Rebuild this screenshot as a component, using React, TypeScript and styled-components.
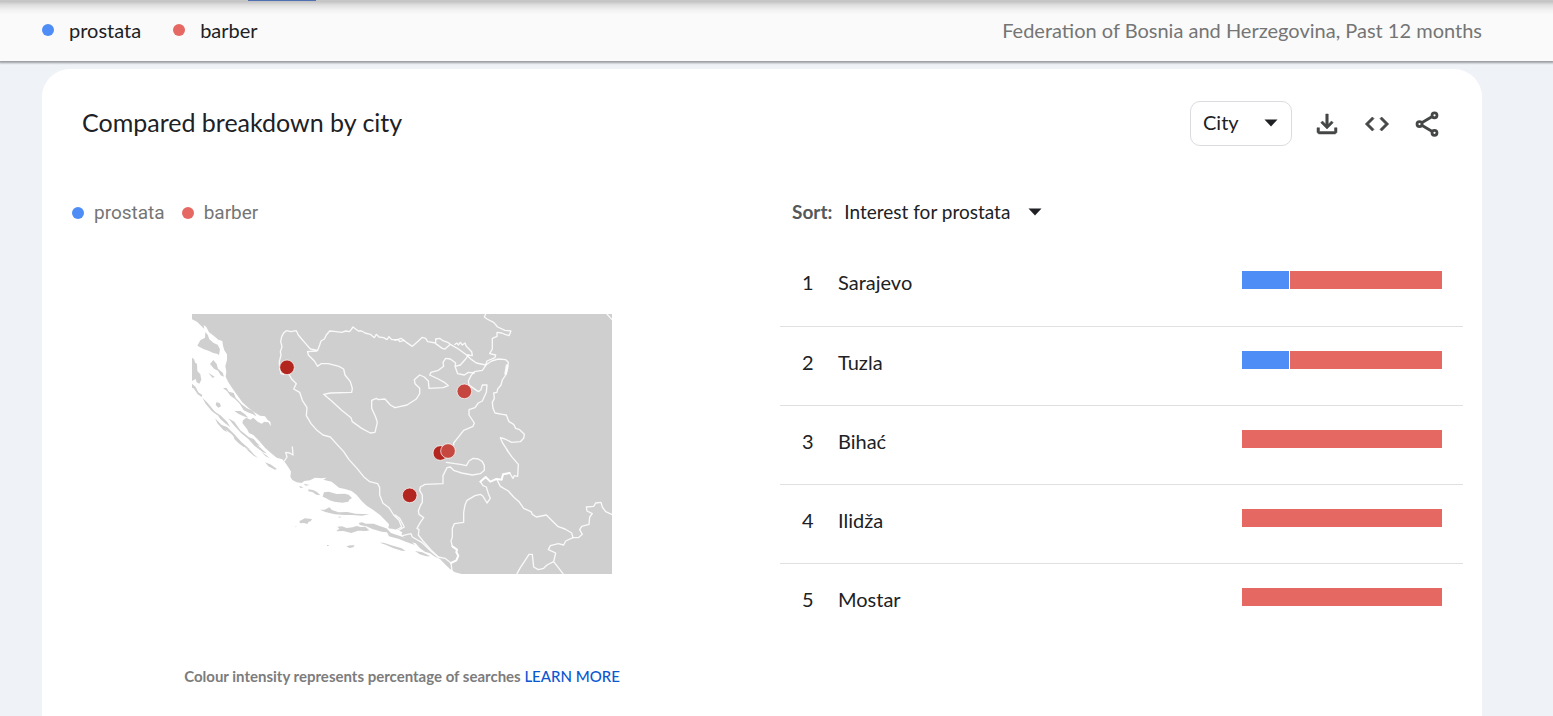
import React from "react";
import styled, { createGlobalStyle } from "styled-components";

const BLUE = "#4f8df6";
const RED = "#e56962";
const SANS = '"Lato", "Open Sans", sans-serif';

const GlobalStyle = createGlobalStyle`
  *, *::before, *::after { box-sizing: border-box; }
  body {
    margin: 0;
    min-height: 100vh;
    background: #eff2f7;
    color: #202124;
    font-family: ${SANS};
    font-size: 20px;
    line-height: 24px;
  }
`;

const TabStrip = styled.div`
  height: 1px;
  background: #dfe0df;
  padding-left: 248px;
`;

const TabIndicator = styled.div`
  width: 68px;
  height: 1px;
  background: #5b7fc9;
`;

const TermBar = styled.header`
  display: flex;
  align-items: center;
  justify-content: space-between;
  height: 60px;
  padding: 0 71px 2px 42px;
  background: linear-gradient(#c0c0c0, #dedede 4px, #f2f2f2 9px, #fafafa 14px);
  box-shadow: 0 1px 2px 1px rgba(0, 0, 0, 0.36);
`;

const Legend = styled.ul<{ $muted?: boolean }>`
  display: flex;
  gap: ${(p) => (p.$muted ? 17 : 32)}px;
  margin: 0;
  padding: 0;
  list-style: none;
  color: ${(p) => (p.$muted ? "#757575" : "#202124")};
  font-family: ${(p) => (p.$muted ? "Roboto, sans-serif" : SANS)};
  font-size: ${(p) => (p.$muted ? 19 : 20)}px;
`;

const Term = styled.li<{ $color: string; $gap: number }>`
  display: flex;
  align-items: center;
  gap: ${(p) => p.$gap}px;

  &::before {
    content: "";
    width: 12px;
    height: 12px;
    border-radius: 50%;
    background: ${(p) => p.$color};
  }
`;

const Scope = styled.p`
  margin: 0;
  color: #757575;
`;

const Page = styled.main`
  padding: 8px 71px 0 42px;
`;

const Card = styled.section`
  min-height: calc(100vh - 69px);
  border-radius: 28px 28px 0 0;
  background: #fff;
`;

const CardHeader = styled.div`
  display: flex;
  align-items: center;
  justify-content: space-between;
  height: 109px;
  padding: 0 40px;
`;

const Title = styled.h1`
  margin: 0;
  padding-bottom: 4px;
  font-size: 25px;
  line-height: 32px;
  font-weight: 400;
`;

const Tools = styled.div`
  display: flex;
  align-items: center;
  gap: 20px;
`;

const IconButton = styled.button`
  display: grid;
  place-items: center;
  width: 30px;
  height: 30px;
  padding: 0;
  border: 0;
  background: none;
  color: #444746;
  cursor: pointer;
`;

const Picker = styled.div<{ $boxed?: boolean }>`
  position: relative;
  width: ${(p) => (p.$boxed ? 102 : 200)}px;
  height: ${(p) => (p.$boxed ? 45 : 24)}px;
  border: ${(p) => (p.$boxed ? "1px solid #dadce0" : "0")};
  border-radius: ${(p) => (p.$boxed ? 10 : 0)}px;

  svg {
    position: absolute;
    right: ${(p) => (p.$boxed ? 13 : 2)}px;
    top: 50%;
    margin-top: -5px;
    pointer-events: none;
  }
`;

const Select = styled.select<{ $inset?: boolean }>`
  appearance: none;
  width: 100%;
  height: 100%;
  padding: 0 0 3px ${(p) => (p.$inset ? 12 : 0)}px;
  border: 0;
  background: none;
  color: #202124;
  font: inherit;
`;

const Columns = styled.div`
  display: grid;
  grid-template-columns: 1fr 1fr;
`;

const MapPane = styled.div`
  padding: 23px 30px 0;
`;

const MapFigure = styled.figure`
  display: flex;
  flex-direction: column;
  align-items: center;
  gap: 90px;
  margin: 89px 0 0;

  svg {
    display: block;
    width: 420px;
    max-width: 100%;
    height: auto;
  }
`;

const Caption = styled.figcaption`
  color: #7c7c7c;
  font-size: 15px;
  font-weight: 700;
`;

const LearnMore = styled.a`
  color: #0b57d0;
  font-weight: 500;
  text-decoration: none;
`;

const RankPane = styled.div`
  padding: 23px 19px 0 18px;
`;

const SortRow = styled.div`
  display: flex;
  gap: 12px;
  padding-left: 12px;
  font-size: 19px;
  line-height: 22px;
`;

const SortLabel = styled.label`
  color: #55585a;
  font-weight: 700;
`;

const RankTable = styled.table`
  width: 100%;
  margin-top: 22px;
  border-collapse: collapse;

  td, th {
    vertical-align: top;
  }
`;

const RankRow = styled.tr`
  height: 79px;

  & + & {
    border-top: 1px solid #e0e0e0;
  }
`;

const Rank = styled.td`
  width: 58px;
  padding: 23px 0 0 22px;
`;

const City = styled.th`
  padding: 23px 0 0;
  font-weight: 400;
  text-align: left;
`;

const Share = styled.td`
  width: 221px;
  padding: 24px 21px 0 0;
`;

const Bar = styled.div`
  display: flex;
  gap: 1px;
  height: 18px;
`;

const Segment = styled.span<{ $color: string }>`
  background: ${(p) => p.$color};
`;

const cities = [
  { name: "Sarajevo", prostata: 235 },
  { name: "Tuzla", prostata: 235 },
  { name: "Bihać", prostata: 0 },
  { name: "Ilidža", prostata: 0 },
  { name: "Mostar", prostata: 0 },
];

const Arrow = () => (
  <svg width="14" height="8" viewBox="0 0 14 8" aria-hidden="true">
    <path d="M0.5 0.5h13L7 7.5z" fill="#202124" />
  </svg>
);

const DownloadIcon = () => (
  <svg width="30" height="30" viewBox="0 0 24 24" fill="currentColor" stroke="currentColor" strokeWidth="0.4" aria-hidden="true">
    <path d="M12 16l-5-5 1.4-1.45 2.6 2.6V4h2v8.15l2.6-2.6L17 11zM6 20q-.82 0-1.41-.59T4 18v-3h2v3h12v-3h2v3q0 .82-.59 1.41T18 20z" />
  </svg>
);

const CodeIcon = () => (
  <svg width="28" height="28" viewBox="0 0 24 24" fill="currentColor" stroke="currentColor" strokeWidth="0.6" aria-hidden="true">
    <path d="M9.4 16.6 4.8 12l4.6-4.6L8 6l-6 6 6 6zm5.2 0 4.6-4.6-4.6-4.6L16 6l6 6-6 6z" />
  </svg>
);

const ShareIcon = () => (
  <svg width="30" height="30" viewBox="0 0 24 24" fill="none" stroke="currentColor" strokeWidth="2.2" aria-hidden="true">
    <circle cx="18" cy="5" r="2" />
    <circle cx="6" cy="12" r="2" />
    <circle cx="18" cy="19" r="2" />
    <path d="M7.8 11 16.2 6M7.8 13l8.4 5" />
  </svg>
);

const RegionMap = () => (
  <svg viewBox="21 27 1260 780" role="img" aria-label="Map of interest by city">
    <rect x="21" y="27" width="1260" height="780" fill="#cfcfcf" />
    {/* Adriatic */}
    <path
      fill="#fff"
      d="M21 43 36 50 48 62 58 72 56 60 64 66 72 82 86 92 100 104 112 108 114 122 118 136 126 148 126 165 121 183 124 200 122 215 130 232 142 250 158 272 172 292 190 308 208 322 225 332 240 334 248 345 256 350 258 364 250 352 238 350 230 356 218 350 205 338 196 344 184 338 174 346 172 354 186 372 192 384 205 390 220 405 240 428 255 442 275 458 292 463 302 475 312 490 318 500 316 515 322 525 335 532 350 534 358 528 375 526 390 518 408 520 425 518 415 524 440 530 452 540 462 548 480 552 500 558 515 570 530 588 545 602 565 615 585 630 600 645 612 658 610 670 625 672 640 676 652 682 648 690 664 702 680 712 692 715 705 730 720 740 735 745 750 755 765 762 780 778 795 792 810 802 830 807 21 807z"
    />
    {/* Islands */}
    <g fill="#cfcfcf">
      <path d="M37 122 46 106 60 98 61 81 68 89 73 103 86 114 98 119 105 133 102 151 98 147 85 144 70 137 55 132z" />
      <path d="M21 158 27 162 31 174 36 176 37 198 46 208 49 224 43 236 35 232 32 222 21 228z" />
      <path d="M75 177 85 165 95 177 99 191 113 203 117 215 107 211 99 197 87 191zM70 203 90 216 82 218zM21 236 32 246 40 262 52 270 50 276 38 268 26 250 21 248z" />
      <path d="M114 250 124 248 132 260 146 264 152 278 170 298 186 310 200 316 208 324 214 334 204 328 188 322 176 316 164 296 150 282 136 272 126 258zM94 292 104 294 108 304 100 308 92 300zM148 318 166 318 180 328 190 338 176 334 160 326z" />
      <path d="M52 278 66 292 88 318 102 330 96 330 80 318 62 296zM92 322 108 332 126 350 136 366 122 356 106 342zM104 358 126 366 148 388 170 412 196 434 182 428 160 410 140 388 120 372zM130 340 148 350 166 376 184 390 208 412 226 428 246 446 234 442 208 422 190 402 168 384 146 360zM90 340 112 362 128 382 116 376 98 356z" />
      <path d="M146 392 158 404 170 414 182 426 176 426 160 414 148 402zM180 426 196 436 206 448 220 460 206 452 190 438zM190 396 206 402 216 414 226 424 212 418 198 408zM240 472 256 478 276 492 270 494 250 484zM228 440 246 452 254 460 242 454z" />
      <path d="M370 553 384 555 396 561 406 571 394 569 382 561 370 559zM342 543 356 547 346 549zM356 536 374 540 362 542z" />
      <path d="M413 575 417 562 431 560 455 567 479 566 491 569 501 579 493 584 490 590 472 593 448 590 434 586 422 579z" />
      <path d="M405 614 419 614 433 607 441 615 461 622 487 621 511 626 553 628 531 632 501 630 477 630 449 628 421 621z" />
      <path d="M343 648 349 646 359 640 381 642 377 649 371 650 367 657 357 654 345 655zM330 665 336 664 332 667zM458 635 470 635 464 638z" />
      <path d="M455 677 463 671 457 665 471 664 485 669 503 667 515 663 527 666 541 665 553 676 543 678 519 677 499 684 475 678 455 679z" />
      <path d="M522 653 532 652 542 656 566 656 586 664 604 670 618 684 636 690 660 698 680 710 690 720 664 711 642 702 612 694 606 682 590 680 562 672 544 664 524 660z" />
      <path d="M584 713 596 713 624 722 650 730 662 738 650 737 624 729 602 719zM484 724 496 721 509 721 505 727 493 729zM426 720 431 720 431 723 426 723zM690 738 712 742 736 754 724 754 704 748zM828 792 838 786 850 790 858 796 858 807 840 807 842 800z" />
    </g>
    {/* Borders */}
    <g fill="none" stroke="#fff" strokeOpacity=".88" strokeWidth="4" strokeLinejoin="round" strokeLinecap="round">
      <path d="M296 208 288 205 284 190 283 170 288 150 286 140 291 125 287 110 290 95 296 84 304 77 318 80 334 77 340 90 350 102 362 116 376 132 398 136 404 120 408 108 418 102 424 90 434 78 448 79 470 82 482 78 494 80 504 66 512 72 520 78 530 78 540 84 556 88 568 98 574 88 582 96 596 98 606 104 612 95 620 104 640 104 644 110 658 106M368 140 396 138" />
      <path d="M630 308 616 300 600 282 580 284 574 280 560 286 560 310 572 336 577 352 570 382 556 384 530 370 502 350 498 338 470 316 440 288 416 268 436 264 500 262 502 250 496 230 480 210 476 192 462 184 430 176 408 176 398 184 388 168 370 150 368 140" />
      <path d="M318 208 326 222 340 236 332 252 350 262 358 286 372 308 370 332 384 356 400 374 420 390 442 396 462 418 482 440 498 464 522 490 542 515 560 530 584 536 590 548 590 570 600 595 618 608 632 630 648 646 656 666 640 675" transform="translate(-6 0)" />
      <path d="M322 426 324 450 314 444 302 442 306 456 298 468" />
      <g transform="translate(630 0)">
        <path d="M0 106 18 100 34 112 52 124 66 112 82 97 92 100 98 110 122 114 122 102 134 100 142 106 158 112 166 118 150 132 142 130 122 116M166 118 190 132 212 148 230 164 244 174 272 180M180 118 186 114 190 120 196 112 202 120 210 114 214 124 230 140 232 152 216 150" />
        <path d="M272 180 276 168 300 158 302 150 284 146 292 132 292 100 306 94 306 82 320 84 330 88 342 92 348 78 330 76 308 66 296 52 276 42 268 36 272 27" />
        <path d="M272 180 290 168 310 162 332 164 340 172 338 190 332 210 322 225 318 240 308 252 306 262 296 264 298 280 292 292 294 310 300 324 322 328 334 330 342 350 356 358 362 370 374 374 388 388 386 400 376 410 350 412 330 402 316 398 324 416 336 434" />
        <path d="M336 182 332 206" strokeWidth="8" />
        <path d="M176 420 176 414 184 404 206 376 234 364 238 354 230 342 222 330 222 314 240 308 250 294 262 288 274 262 276 240 262 240 258 254 250 260 236 250 222 240 220 228 228 212 238 200 262 196 272 182" />
        <path d="M220 150 212 162 196 180 180 184 188 206 208 210 220 202 238 204M180 184 182 174 166 162 152 160 144 172 146 184 130 196 108 202 104 210 130 222 148 232 160 242 144 248 102 250 100 228 88 216 74 210 58 224 60 236 74 250 74 266 64 282 36 300 0 308" />
        <path d="M636 27 651 44" />
      </g>
      <g transform="translate(630 390)">
        <path d="M336 45 350 65 370 88 368 124 358 122 354 130 344 114 324 118 320 134 304 132 286 140 272 126 256 140 264 152 274 156 280 176 286 190 276 204 264 184 256 178 240 182 216 196 210 210 206 232 206 262 178 266 172 280 172 306 168 318 172 334 186 344 184 352 190 362 184 376 168 384 150 370 130 366 108 345 84 318 70 300 72 284 66 280 76 262 86 248 72 238 70 228 76 212 82 202 82 180 74 166 76 156 90 148 144 146 144 122 156 98 166 96 176 106 200 114 232 120 256 116 268 106 268 92 262 80 250 72 234 70 222 78 214 92 196 88 180 86 154 82M168 384 172 414" />
        <path d="M0 240 14 250 28 276 14 284 4 292 22 302 48 296 52 306 80 322 110 350 132 368" />
        <path d="M306 134 316 154 340 168 356 186 372 200 386 220 408 230 412 238 424 246 454 240 472 258 488 274 510 282 530 294 534 308 512 318 506 330 490 326 466 332 460 344 482 354 476 380 456 390 446 400 430 404 416 396 412 358 402 358 388 380 376 398 366 416M476 380 490 398 504 416" />
        <path d="M534 308 550 308 562 298 554 284 560 274 582 268 584 246 592 236 576 228 574 216 596 214 602 204 618 202 622 216 632 230 650 238" />
        <path d="M256 140 272 126 286 140 304 132 320 134 324 118 344 114" strokeWidth="6" />
        <path d="M172 334 186 344 184 352 190 362 184 376 168 384" strokeWidth="6" />
      </g>
    </g>
    <g stroke="#fff" strokeOpacity=".7" strokeWidth="3">
      <circle cx="306" cy="187" r="22" fill="#b2261f" />
      <circle cx="838" cy="259" r="22" fill="#c5473f" />
      <circle cx="766" cy="444" r="22" fill="#b2261f" />
      <circle cx="789" cy="438" r="22" fill="#c5473f" />
      <circle cx="674" cy="571" r="22" fill="#b2261f" />
    </g>
  </svg>
);

export default function App() {
  return (
    <>
      <GlobalStyle />
      <TabStrip>
        <TabIndicator />
      </TabStrip>
      <TermBar>
        <Legend>
          <Term $color={BLUE} $gap={15}>prostata</Term>
          <Term $color={RED} $gap={15}>barber</Term>
        </Legend>
        <Scope>Federation of Bosnia and Herzegovina, Past 12 months</Scope>
      </TermBar>
      <Page>
        <Card>
          <CardHeader>
            <Title>Compared breakdown by city</Title>
            <Tools>
              <Picker $boxed>
                <Select $inset aria-label="Resolution" defaultValue="City">
                  <option>City</option>
                </Select>
                <Arrow />
              </Picker>
              <IconButton type="button" aria-label="Download"><DownloadIcon /></IconButton>
              <IconButton type="button" aria-label="Embed"><CodeIcon /></IconButton>
              <IconButton type="button" aria-label="Share"><ShareIcon /></IconButton>
            </Tools>
          </CardHeader>
          <Columns>
            <MapPane>
              <Legend $muted>
                <Term $color={BLUE} $gap={10}>prostata</Term>
                <Term $color={RED} $gap={10}>barber</Term>
              </Legend>
              <MapFigure>
                <RegionMap />
                <Caption>
                  Colour intensity represents percentage of searches{" "}
                  <LearnMore href="#learn-more">LEARN MORE</LearnMore>
                </Caption>
              </MapFigure>
            </MapPane>
            <RankPane>
              <SortRow>
                <SortLabel htmlFor="sort">Sort:</SortLabel>
                <Picker>
                  <Select id="sort" defaultValue="Interest for prostata">
                    <option>Interest for prostata</option>
                  </Select>
                  <Arrow />
                </Picker>
              </SortRow>
              <RankTable>
                <tbody>
                  {cities.map((city, i) => (
                    <RankRow key={city.name}>
                      <Rank>{i + 1}</Rank>
                      <City scope="row">{city.name}</City>
                      <Share>
                        <Bar>
                          {city.prostata > 0 && (
                            <Segment $color={BLUE} style={{ flexGrow: city.prostata }} />
                          )}
                          <Segment $color={RED} style={{ flexGrow: 1000 - city.prostata }} />
                        </Bar>
                      </Share>
                    </RankRow>
                  ))}
                </tbody>
              </RankTable>
            </RankPane>
          </Columns>
        </Card>
      </Page>
    </>
  );
}
